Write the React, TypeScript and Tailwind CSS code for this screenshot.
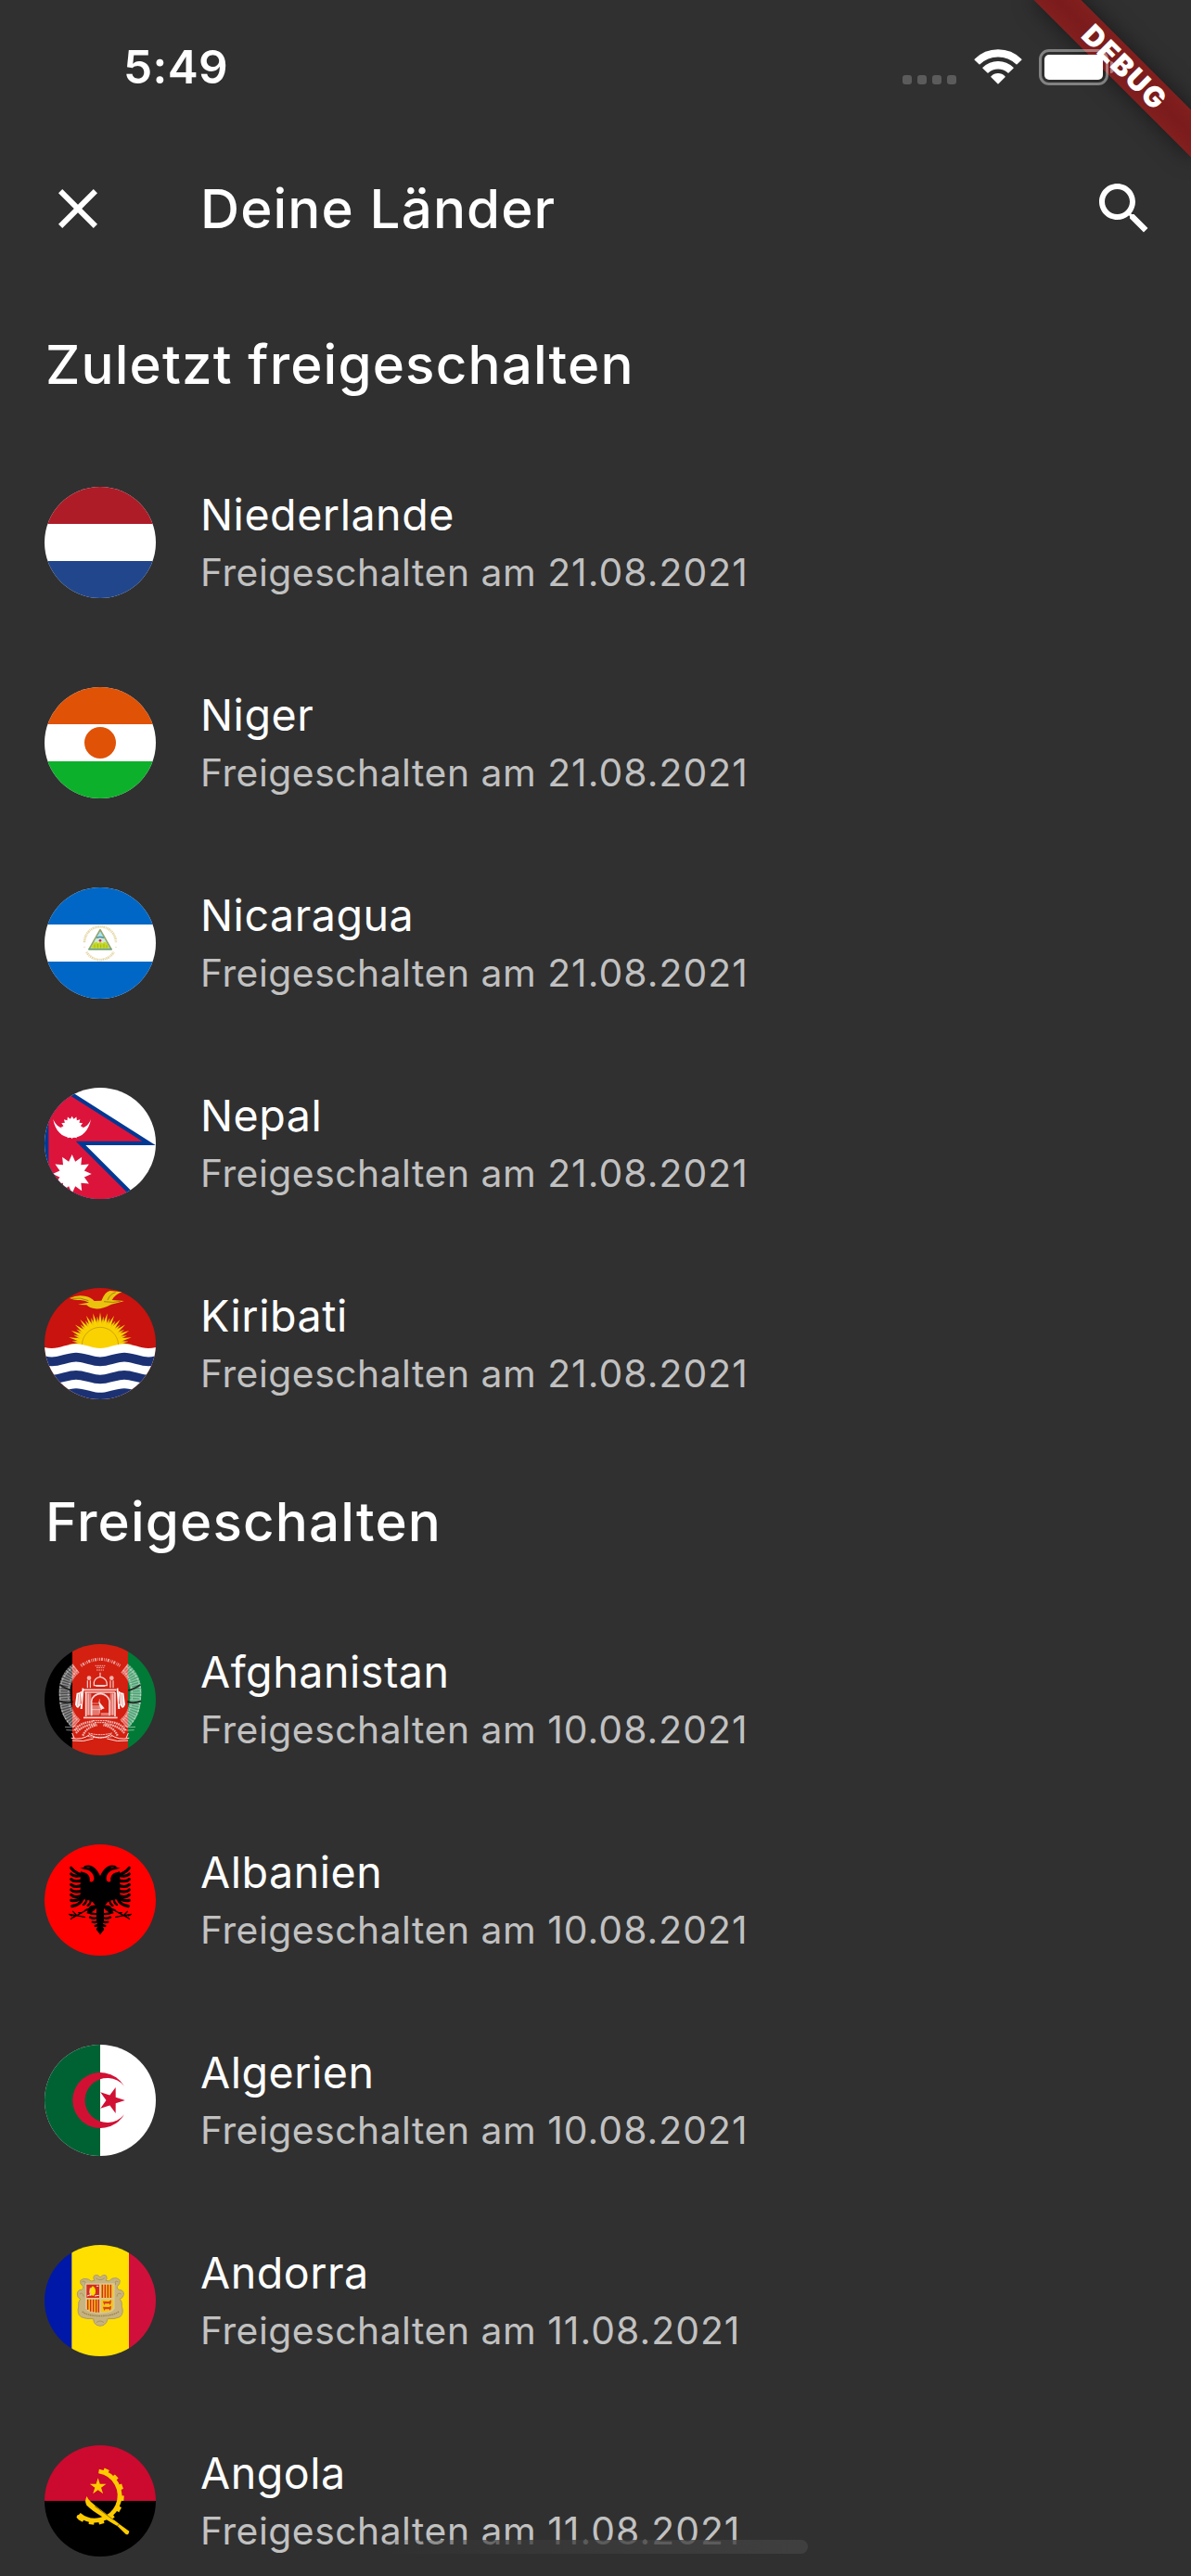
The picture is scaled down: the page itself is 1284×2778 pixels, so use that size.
import React from 'react';

function star(cx: number, cy: number, points: number, outer: number, inner: number, start = -90): string {
  return Array.from({ length: points * 2 }, (_, i) => {
    const r = i % 2 === 0 ? outer : inner;
    const a = ((start + (i * 180) / points) * Math.PI) / 180;
    return `${(cx + r * Math.cos(a)).toFixed(1)},${(cy + r * Math.sin(a)).toFixed(1)}`;
  }).join(' ');
}

function Disc({ top, children }: { top: number; children: React.ReactNode }) {
  return (
    <svg viewBox={`54 ${top} 360 360`} className="size-[120px] shrink-0 rounded-full" aria-hidden="true">
      {children}
    </svg>
  );
}

function Netherlands() {
  return (
    <Disc top={0}>
      <path fill="#fff" d="M54 0h360v360H54z" />
      <path fill="#ae1c28" d="M54 0h360v120H54z" />
      <path fill="#21468b" d="M54 240h360v120H54z" />
    </Disc>
  );
}

function Niger() {
  return (
    <Disc top={0}>
      <path fill="#fff" d="M54 0h360v360H54z" />
      <path fill="#e05206" d="M54 0h360v120H54z" />
      <path fill="#0db02b" d="M54 240h360v120H54z" />
      <circle cx="234" cy="180" r="51" fill="#e05206" />
    </Disc>
  );
}

function Nicaragua() {
  return (
    <Disc top={81}>
      <path fill="#fff" d="M54 81h360v360H54z" />
      <path fill="#0067c6" d="M54 81h360v120H54zM54 321h360v120H54z" />
      <g fill="none" stroke="#e6d8a8" strokeWidth="8">
        <path d="M183 259A51 51 0 0 1 285 259" strokeDasharray="5 2 3 2 4 2" />
        <path d="M190 290A51 51 0 0 0 278 290" strokeDasharray="4 2 5 2 3 2" />
      </g>
      <circle cx="183" cy="274" r="2" fill="#dfcd94" />
      <circle cx="285" cy="274" r="2" fill="#dfcd94" />
      <path fill="#a8e2f5" stroke="#96a66a" strokeWidth="5" strokeLinejoin="round" d="M234 218L198 281H270Z" />
      <path fill="#cfe9d4" d="M219 249Q234 232 249 249L254 262H214Z" />
      <path fill="none" stroke="#4b8f9e" strokeWidth="4" d="M222 244Q234 239 246 244" />
      <path fill="#c8d820" d="M212 262L222 257 228 262 234 257 241 262 248 257 256 262 264 278H204Z" />
      <path fill="none" stroke="#8dab1e" strokeWidth="2" d="M216 277V266M226 277V264M236 277V266M246 277V264M255 277V268" />
      <path fill="none" stroke="#5f9b86" strokeWidth="4" d="M196 281H272" />
      <circle cx="234" cy="253" r="4" fill="#d3204c" />
    </Disc>
  );
}

function Nepal() {
  return (
    <Disc top={54}>
      <path fill="#fff" d="M54 54h360v360H54z" />
      <path fill="#003893" d="M54 12L413 240H187L420 473H54Z" />
      <path fill="#dc143c" d="M67 35L370 227H155L350 422H67Z" />
      <path fill="#fff" d="M82 156C88 193 110 216 143 216S197 193 204 156C196 177 180 190 143 190S91 177 82 156Z" />
      <polygon fill="#fff" points={star(143, 183, 16, 37, 28)} />
      <polygon fill="#fff" points={star(143, 333, 12, 63, 41)} />
    </Disc>
  );
}

const WAVE = 'M0 238C26 238 52 252 78 252S130 238 156 238 208 252 234 252 286 238 312 238 364 252 390 252 442 238 468 238';

function Kiribati() {
  return (
    <Disc top={57}>
      <path fill="#c8130f" d="M54 57h360v360H54z" />
      <polygon fill="#f3cc0b" stroke="#b98a10" strokeWidth="1.5" points={star(234, 240, 28, 90, 62, -96)} />
      <polygon fill="#fad201" points={star(234, 240, 28, 104, 60)} />
      <circle cx="234" cy="243" r="59" fill="#fad201" stroke="#c59c10" strokeWidth="2.5" />
      <path
        fill="#eac30f"
        d="M135 90Q160 78 185 83Q205 87 215 99L238 98Q250 68 266 66L306 70Q284 76 272 96L312 99Q288 106 270 110Q240 126 218 124Q200 122 190 112L162 111Q178 106 198 104Q180 94 164 96Q150 97 135 90Z"
      />
      <path fill="none" stroke="#a47f0e" strokeWidth="3" d="M142 91Q170 86 196 98M258 96Q266 76 284 71M246 101Q278 106 300 100" />
      <path fill="#fff" d={`${WAVE}V430H0Z`} />
      {[43, 100.5, 158].map((dy) => (
        <path key={dy} d={WAVE} transform={`translate(0 ${dy})`} fill="none" stroke="#1b3173" strokeWidth="29" />
      ))}
    </Disc>
  );
}

function AfghanWreath() {
  return (
    <g>
      <g fill="none" stroke="#fff">
        <path d="M156 132Q112 165 120 230Q122 282 158 312" strokeWidth="36" strokeOpacity=".3" />
        <path d="M156 132Q112 165 120 230Q122 282 158 312" strokeWidth="36" strokeOpacity=".35" strokeDasharray="4 4" />
        <path d="M150 126Q98 160 104 228Q106 285 142 322" strokeWidth="4" strokeOpacity=".4" strokeDasharray="9 4" />
        <path d="M160 138Q128 170 131 228Q134 275 165 305" strokeWidth="4" strokeOpacity=".4" strokeDasharray="7 5" />
        <path d="M120 322Q135 326 158 318M124 332Q150 336 164 328" strokeWidth="3" strokeOpacity=".5" />
        <path d="M152 334Q165 308 214 304M156 342Q175 316 220 312M178 350Q190 322 224 316" strokeWidth="7" strokeOpacity=".65" strokeDasharray="5 2" />
        <path d="M140 358Q175 366 200 347Q220 358 234 357M144 366Q180 372 212 360M143 342L150 358" strokeWidth="3" strokeOpacity=".85" />
      </g>
      <path fill="none" stroke="#111" strokeOpacity=".8" strokeWidth="6" d="M104 186Q125 200 143 204M102 238Q125 248 146 240" />
      <path fill="#fff" d="M176 196L181 198 176 264 170 264ZM174 206Q164 214 158 212L153 250Q158 262 163 260L174 246Z" />
      <path fill="none" stroke="#d32011" strokeWidth="2" strokeOpacity=".7" d="M164 216L161 254M170 212L168 250" />
    </g>
  );
}

function Afghanistan() {
  return (
    <Disc top={54}>
      <path fill="#000" d="M54 54h90v360H54z" />
      <path fill="#d32011" d="M144 54h180v360H144z" />
      <path fill="#007a36" d="M324 54h90v360h-90z" />
      <AfghanWreath />
      <g transform="translate(468 0) scale(-1 1)">
        <AfghanWreath />
      </g>
      <path fill="none" stroke="#fff" strokeWidth="10" strokeOpacity=".6" strokeDasharray="3 3 6 4 2 3" d="M172 124Q234 82 298 124" />
      <path fill="none" stroke="#fff" strokeWidth="3" strokeOpacity=".65" strokeDasharray="5 2" d="M218 124H250M222 130H247M222 138H246" />
      <g fill="none" stroke="#fff" strokeWidth="3.5" strokeOpacity=".8">
        <path d="M214 188Q210 165 234 160Q258 165 256 188ZM234 160V146M220 190H250" />
        <path d="M193 196V172M202 196V172M267 196V172M276 196V172" />
        <path d="M180 202H286M184 210H282M188 210V288M282 210V288M180 292H290" strokeWidth="5" />
        <path d="M206 286V238Q210 216 236 214Q260 218 264 238V286" strokeWidth="5" />
        <path d="M196 214V284M274 214V284M206 246H232M206 266H240M232 232V278" strokeWidth="2.5" strokeOpacity=".6" />
        <path d="M210 302H258M216 308H252M196 342Q234 352 272 342M194 352Q234 362 274 352" strokeWidth="3" strokeDasharray="6 2" />
      </g>
      <path fill="#fff" fillOpacity=".4" d="M206 252H232V284H206ZM190 214H205V284H190ZM236 276H262V286H236ZM266 214H280V284H266Z" />
      <path fill="#fff" fillOpacity=".9" d="M228 238L248 262 236 266Z" />
      <circle cx="198" cy="164" r="7" fill="#f4b4ae" />
      <circle cx="271" cy="164" r="7" fill="#f4b4ae" />
    </Disc>
  );
}

function HalfEagle() {
  return (
    <g>
      <path d="M235 162C231 150 218 128 201 125C190 123 183 126 180 131L169 134L184 138C198 138 213 150 214 166C215 177 206 181 200 176C202 160 194 150 180 148L172 144L170 150V232L206 240L222 258L222 300L226 322L221 332L234 349H235Z" />
      <g fill="none" stroke="#000" strokeWidth="9.5" strokeLinecap="round">
        <path d="M140 133Q150 148 176 156" />
        {[153, 170, 187, 204, 220].map((y) => (
          <path key={y} d={`M140 ${y}Q150 ${y + 11} 176 ${y + 3}`} />
        ))}
        <path d="M140 238Q160 242 176 228M143 257Q168 254 178 232" />
      </g>
      <g fill="none" stroke="#000" strokeWidth="7" strokeLinecap="round">
        <path d="M190 234Q190 246 180 252M204 234Q204 248 194 255" />
        <path d="M226 282Q210 284 198 278M227 292Q216 300 201 293M229 302Q224 312 209 308M231 310Q229 320 218 321" />
      </g>
      <path d="M224 254Q200 252 196 264L182 268L194 272L190 280Q206 282 224 262Z" />
      <path fill="none" stroke="#000" strokeWidth="4" strokeLinecap="round" d="M192 268L146 294M184 292L134 283M146 274L156 285L140 298M164 278H176M134 283L142 288" />
    </g>
  );
}

function Albania() {
  return (
    <Disc top={57}>
      <path fill="#f00" d="M54 57h360v360H54z" />
      <HalfEagle />
      <g transform="translate(468 0) scale(-1 1)">
        <HalfEagle />
      </g>
      <path fill="none" stroke="#f00" strokeWidth="2" d="M190 132H200M278 132H268" />
    </Disc>
  );
}

function Algeria() {
  return (
    <Disc top={45}>
      <path fill="#fff" d="M54 45h360v360H54z" />
      <path fill="#006233" d="M54 45h180v360H54z" />
      <path fill="#d21034" d="M312 179A90 90 0 1 0 312 271A72 72 0 1 1 312 179Z" />
      <polygon fill="#d21034" points={star(270.4, 225, 5, 44, 17, 0)} />
    </Disc>
  );
}

function Andorra() {
  return (
    <Disc top={63}>
      <path fill="#0018a8" d="M54 63h88v360H54z" />
      <path fill="#fedf00" d="M142 63h185v360H142z" />
      <path fill="#d0103a" d="M327 63h87v360h-87z" />
      <path
        fill="#c7b37f"
        stroke="#b09a62"
        strokeWidth="3"
        d="M234 168Q244 156 254 163Q258 174 252 178Q264 184 272 172Q290 166 298 178Q298 190 290 196Q286 206 296 208Q312 210 310 224Q306 236 298 238Q306 246 304 262Q312 284 298 296Q280 304 258 302Q256 316 246 322Q234 328 222 322Q212 316 212 302Q190 304 172 296Q158 286 164 262Q162 246 170 238Q160 234 160 222Q160 208 174 208Q182 204 178 196Q168 190 170 178Q180 168 196 174Q204 184 216 178Q210 172 214 163Q226 156 234 168Z"
      />
      <path fill="none" stroke="#a8945c" strokeWidth="3" d="M220 170Q234 182 248 170M176 182Q188 176 186 192M292 182Q280 176 284 192M168 222Q178 214 180 230M302 222Q290 214 288 230M222 314Q234 304 246 314" />
      <path fill="#d8c894" d="M186 187H281V268Q276 284 234 286Q192 284 186 268Z" />
      <path fill="#d52b1e" d="M190 191H231V234H190Z" />
      <path fill="#fedf00" d="M210 196Q222 204 218 220L212 228 204 224Q196 208 210 196Z" />
      <path fill="none" stroke="#f6e7d9" strokeWidth="3" d="M202 202Q198 218 204 228M192 228L202 224M216 228L230 226M222 196H229" />
      <path fill="#f5c518" d="M237 191H276V234H237ZM190 239H231V281Q196 280 190 268ZM237 239H276V266Q272 280 237 281Z" />
      <path fill="none" stroke="#d52b1e" strokeWidth="4.5" d="M241 191V234M250 191V234M259 191V234M268 191V234M194 239V272M203 239V278M212 239V280M221 239V281M229 239V281" />
      <path fill="#d7431e" d="M243 245L262 246 270 241 269 251 266 257 263 253H250L248 258 245 252ZM243 263L262 264 270 260 269 269 266 275 263 271H250L248 276 245 270Z" />
      <path fill="none" stroke="#9a8550" strokeWidth="4" strokeDasharray="5 2" d="M176 278Q190 292 234 293Q278 292 294 278" />
    </Disc>
  );
}

const COG_TEETH = [-66, -42, -19, 5, 29, 52, 76, 97, 120];

function Angola() {
  return (
    <Disc top={60}>
      <path fill="#cc092f" d="M54 60h360v180H54z" />
      <path fill="#000" d="M54 240h360v180H54z" />
      <path fill="none" stroke="#ffcb00" strokeWidth="14" d="M229.5 144A80 80 0 1 1 165.6 284.3" />
      {COG_TEETH.map((a) => (
        <rect key={a} x="298" y="215" width="13" height="17" fill="#ffcb00" transform={`rotate(${a} 217 223)`} />
      ))}
      <circle cx="165" cy="292" r="7" fill="#ffcb00" />
      <path fill="#ffcb00" d="M191 225Q182 240 190 254C215 278 255 300 290 322L317 348Q326 352 328 338L300 318C262 288 225 262 204 243Q194 236 191 225Z" />
      <path fill="none" stroke="#5a4700" strokeWidth="2" d="M216 257Q250 282 278 302M290 321L296 314" />
      <polygon fill="#ffcb00" points={star(227, 194, 5, 28, 10.5)} />
    </Disc>
  );
}

interface Country {
  name: string;
  date: string;
  Flag: () => React.JSX.Element;
}

const RECENT: Country[] = [
  { name: 'Niederlande', date: '21.08.2021', Flag: Netherlands },
  { name: 'Niger', date: '21.08.2021', Flag: Niger },
  { name: 'Nicaragua', date: '21.08.2021', Flag: Nicaragua },
  { name: 'Nepal', date: '21.08.2021', Flag: Nepal },
  { name: 'Kiribati', date: '21.08.2021', Flag: Kiribati },
];

const UNLOCKED: Country[] = [
  { name: 'Afghanistan', date: '10.08.2021', Flag: Afghanistan },
  { name: 'Albanien', date: '10.08.2021', Flag: Albania },
  { name: 'Algerien', date: '10.08.2021', Flag: Algeria },
  { name: 'Andorra', date: '11.08.2021', Flag: Andorra },
  { name: 'Angola', date: '11.08.2021', Flag: Angola },
];

function CountryRow({ name, date, Flag }: Country) {
  return (
    <li className="flex h-[216px] gap-12 px-12">
      <div className="flex items-center">
        <Flag />
      </div>
      <div className="pt-[47px] whitespace-nowrap">
        <p className="text-[46.6px] leading-[62px] tracking-[0.52px] text-white">{name}</p>
        <p className="text-[40.8px] leading-[62px] tracking-[0.52px] text-[#c1c1c1]">
          Freigeschalten am <span className="tracking-[1.05px]">{date}</span>
        </p>
      </div>
    </li>
  );
}

function Section({ title, items }: { title: string; items: Country[] }) {
  return (
    <section>
      <h2 className="flex h-[168px] items-center pr-12 pl-[49px] text-[58.3px] leading-none font-medium tracking-[1.15px]">{title}</h2>
      <ul>
        {items.map((c) => (
          <CountryRow key={c.name} {...c} />
        ))}
      </ul>
    </section>
  );
}

function StatusBar() {
  return (
    <div className="relative z-20 flex h-[141px] items-start justify-between pr-[83px] pl-[133px]">
      <span className="pt-[42px] text-[49.5px] leading-[61px] font-semibold tracking-[0.37px]">5:49</span>
      <div className="flex pt-[53px]">
        <div className="flex gap-1.5 pt-7">
          {[0, 1, 2, 3].map((i) => (
            <span key={i} className="size-2.5 rounded-[3px] bg-[#5b5b5b]" />
          ))}
        </div>
        <svg viewBox="0 0 52 39" className="ml-[19px] h-[39px] w-[52px]" fill="#fff" stroke="#fff" strokeWidth="1.5" strokeLinejoin="round">
          <path d="M1.2 11.2C15-2.3 37-2.3 50.8 11.2L46 15.8C35 5 17 5 6 15.8Z" />
          <path d="M10 20.3C19 11.5 33 11.5 42 20.3L37 25C31 19.3 21 19.3 15 25Z" />
          <path d="M19 29.7C23 25.7 29 25.7 33 29.7L26 36.8Z" />
        </svg>
        <div className="ml-[18px] flex items-center">
          <div className="h-[39px] w-[75px] rounded-[11px] border-[3px] border-white/40 p-[3px]">
            <div className="h-full w-full rounded-[5px] bg-white" />
          </div>
          <div className="ml-0.5 h-[13px] w-1 rounded-r-full bg-white/40" />
        </div>
      </div>
    </div>
  );
}

function DebugBanner() {
  return (
    <div className="pointer-events-none absolute top-0 right-0 z-10 size-[220px] overflow-hidden">
      <div className="absolute top-[54px] left-[28px] flex h-9 w-60 rotate-45 items-center justify-center bg-linear-to-b from-[#821f1f] via-[#7b1b1b] to-[#821f1f] shadow-[0_0_24px_rgba(0,0,0,0.5)]">
        <span className="pl-0.5 text-[30.6px] leading-none font-black tracking-[1.7px]">DEBUG</span>
      </div>
    </div>
  );
}

export default function App() {
  return (
    <main className="relative h-[2778px] w-[1284px] overflow-hidden bg-[#303030] font-['Inter',sans-serif] text-white">
      <DebugBanner />
      <StatusBar />
      <header className="flex h-[168px] items-center pr-9 pl-12">
        <button aria-label="Schließen">
          <svg viewBox="0 0 24 24" className="size-[72px]" fill="currentColor">
            <path d="M19 6.41L17.59 5 12 10.59 6.41 5 5 6.41 10.59 12 5 17.59 6.41 19 12 13.41 17.59 19 19 17.59 13.41 12z" />
          </svg>
        </button>
        <h1 className="ml-24 flex-1 text-[58.3px] leading-none font-medium tracking-[1.12px]">Deine Länder</h1>
        <button aria-label="Suchen">
          <svg viewBox="0 0 24 24" className="size-[72px]" fill="currentColor">
            <path d="M15.5 14h-.79l-.28-.27C15.41 12.59 16 11.11 16 9.5 16 5.91 13.09 3 9.5 3S3 5.91 3 9.5 5.91 16 9.5 16c1.61 0 3.09-.59 4.23-1.57l.27.28v.79l5 4.99L20.49 19l-4.99-5zm-6 0C7.01 14 5 11.99 5 9.5S7.01 5 9.5 5 14 7.01 14 9.5 11.99 14 9.5 14z" />
          </svg>
        </button>
      </header>
      <Section title="Zuletzt freigeschalten" items={RECENT} />
      <Section title="Freigeschalten" items={UNLOCKED} />
      <div className="absolute bottom-6 left-[413px] h-[15px] w-[458px] rounded-full bg-linear-to-r from-[#303030]/10 via-[#383838]/75 via-30% to-[#434343]/80" />
    </main>
  );
}
